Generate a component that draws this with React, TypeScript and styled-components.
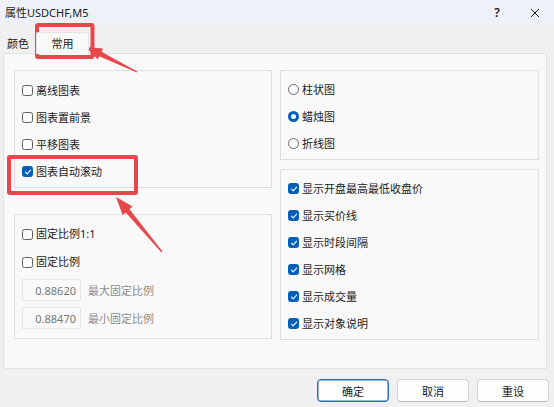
import React from 'react';
import styled, {createGlobalStyle, css} from 'styled-components';

const GlobalStyle = createGlobalStyle`
    html, body {
        margin: 0;
        padding: 0;
        background: #f0f0f0;
    }
    body {
        font-family: 'Noto Sans', 'Noto Sans CJK SC', sans-serif;
        font-size: 11px;
        color: #1b1b1b;
    }
`;

interface CheckProps {
    $checked?: boolean
}

interface RowProps {
    $h?: number
}

const CheckMark = () => (
    <svg width="8" height="8" viewBox="0 0 8 8">
        <path d="M1.4 4.2 L3.2 5.9 L6.6 2.2" fill="none" stroke="#fff" strokeWidth="1.1" strokeLinecap="round" strokeLinejoin="round"/>
    </svg>
);

const Check = ({checked, label}: {checked?: boolean, label: string}) => (
    <>
        <CheckBox $checked={checked}>{checked && <CheckMark/>}</CheckBox>
        <Label>{label}</Label>
    </>
);

const leftTop = ['离线图表', '图表置前景', '平移图表'];
const rightBottom = ['显示开盘最高最低收盘价', '显示买价线', '显示时段间隔', '显示网格', '显示成交量', '显示对象说明'];
const chartTypes = [
    {label: '柱状图', on: false},
    {label: '蜡烛图', on: true},
    {label: '折线图', on: false},
];

const App = () => {
    return (
        <Window>
            <GlobalStyle/>
            <TitleBar>
                <Title>属性USDCHF,M5</Title>
                <TitleActions>
                    <TitleButton>?</TitleButton>
                    <TitleButton>
                        <svg width="10" height="10" viewBox="0 0 10 10">
                            <path d="M1 1 L9 9 M9 1 L1 9" stroke="#1b1b1b" strokeWidth="1"/>
                        </svg>
                    </TitleButton>
                </TitleActions>
            </TitleBar>

            <TabStrip>
                <Tab>颜色</Tab>
                <Tab $active>常用</Tab>
            </TabStrip>

            <Panel>
                <Column $gap={26}>
                    <Group $pad="6px 0 2px 7px">
                        {leftTop.map((t) => (
                            <Row key={t}><Check label={t}/></Row>
                        ))}
                        <Row><Check checked label="图表自动滚动"/></Row>
                    </Group>
                    <Group $pad="5px 0 9px 7px">
                        <Row $h={28}><Check label="固定比例1:1"/></Row>
                        <Row $h={28}><Check label="固定比例"/></Row>
                        <InputRow>
                            <NumberBox>0.88620</NumberBox>
                            <Hint>最大固定比例</Hint>
                        </InputRow>
                        <InputRow>
                            <NumberBox>0.88470</NumberBox>
                            <Hint>最小固定比例</Hint>
                        </InputRow>
                    </Group>
                </Column>

                <Column $gap={9}>
                    <Group $pad="5px 0 2px 7px">
                        {chartTypes.map((c) => (
                            <Row key={c.label}>
                                <Radio $checked={c.on}/>
                                <Label>{c.label}</Label>
                            </Row>
                        ))}
                    </Group>
                    <Group $pad="5px 0 2px 7px">
                        {rightBottom.map((t) => (
                            <Row key={t}><Check checked label={t}/></Row>
                        ))}
                    </Group>
                </Column>
            </Panel>

            <Footer>
                <Button $primary>确定</Button>
                <Button>取消</Button>
                <Button>重设</Button>
            </Footer>

            <Overlay width="554" height="407" viewBox="0 0 554 407">
                <rect x="37" y="25" width="55.5" height="32" fill="none" stroke="#e5474a" strokeWidth="4" rx="1"/>
                <polygon fill="#e5474a" points="86,47 103,48.6 101.5,51.8 137.2,71.6 136.8,72.4 99.3,56.2 97.8,59.4"/>
                <rect x="9" y="157" width="127" height="36" fill="none" stroke="#e5474a" strokeWidth="4" rx="1"/>
                <polygon fill="#e5474a" points="116,197 132.6,206.6 129.5,209.2 162.5,251.6 161.5,252.4 125.7,212.4 122.6,215"/>
            </Overlay>
        </Window>
    );
};

export default App;

const Window = styled.div`
    position: relative;
    width: 554px;
    height: 407px;
    background: #f0f0f0;
    overflow: hidden;
`;

const TitleBar = styled.div`
    display: flex;
    align-items: center;
    justify-content: space-between;
    height: 25px;
    padding-left: 5px;
    background: #eef1f7;
`;

const Title = styled.span`
    font-size: 11px;
    line-height: 14px;
`;

const TitleActions = styled.div`
    display: flex;
    align-items: center;
    height: 100%;
`;

const TitleButton = styled.div`
    display: flex;
    align-items: center;
    justify-content: center;
    width: 38px;
    height: 100%;
    font-size: 12px;
    font-weight: 600;
`;

const TabStrip = styled.div`
    display: flex;
    align-items: flex-end;
    height: 28px;
    padding-left: 2px;
    position: relative;
    z-index: 1;
`;

const Tab = styled.div<{$active?: boolean}>`
    display: flex;
    align-items: center;
    justify-content: center;
    height: 18px;
    padding: 0 5px;
    font-size: 11px;
    margin-bottom: 1px;

    ${(props) => props.$active && css`
        width: 51px;
        height: 20px;
        padding: 0 0 1px;
        margin-left: 2px;
        margin-bottom: -1px;
        background: #f9f9f9;
        border: 1px solid #e3e3e3;
        border-bottom: none;
        border-radius: 2px 2px 0 0;
    `};
`;

const Panel = styled.div`
    display: flex;
    gap: 8px;
    box-sizing: border-box;
    width: 544px;
    height: 316px;
    margin-left: 3px;
    padding: 16px 7px 0 10px;
    background: #f9f9f9;
    border: 1px solid #e3e3e3;
`;

const Column = styled.div<{$gap: number}>`
    display: flex;
    flex-direction: column;
    gap: ${(props) => props.$gap}px;
    width: 259px;

    &:first-child {
        width: 258px;
    }
`;

const Group = styled.div<{$pad: string}>`
    display: flex;
    flex-direction: column;
    padding: ${(props) => props.$pad};
    border: 1px solid #dedede;
    background: #f9f9f9;
`;

const Row = styled.div<RowProps>`
    display: flex;
    align-items: center;
    height: ${(props) => props.$h || 27}px;
`;

const CheckBox = styled.span<CheckProps>`
    display: flex;
    align-items: center;
    justify-content: center;
    box-sizing: border-box;
    width: 11px;
    height: 11px;
    border-radius: 2.5px;
    border: 1px solid #5f5f5f;
    background: #fdfdfd;

    ${(props) => props.$checked && css`
        border-color: #005fb8;
        background: #005fb8;
    `};
`;

const Radio = styled.span<CheckProps>`
    box-sizing: border-box;
    width: 11px;
    height: 11px;
    border-radius: 50%;
    border: 1px solid #6a6a6a;
    background: #fdfdfd;

    ${(props) => props.$checked && css`
        border: 3px solid #005fb8;
        background: #fff;
    `};
`;

const Label = styled.span`
    margin-left: 3px;
    font-size: 11px;
    line-height: 14px;
    white-space: nowrap;
`;

const InputRow = styled.div`
    display: flex;
    align-items: center;
    margin-top: 3px;

    & + & {
        margin-top: 6px;
    }
`;

const NumberBox = styled.div`
    display: flex;
    align-items: center;
    justify-content: flex-end;
    box-sizing: border-box;
    width: 59px;
    height: 22px;
    padding-right: 4px;
    border: 1px solid #e6e6e6;
    background: #fafafa;
    color: #777;
    font-size: 11px;
`;

const Hint = styled.span`
    margin-left: 7px;
    color: #8c8c8c;
    font-size: 11px;
`;

const Footer = styled.div`
    display: flex;
    justify-content: flex-end;
    gap: 8px;
    padding: 10px 5px 0 0;
`;

const Button = styled.div<{$primary?: boolean}>`
    display: flex;
    align-items: center;
    justify-content: center;
    box-sizing: border-box;
    width: 72px;
    height: 23px;
    border-radius: 4px;
    border: 1px solid #d2d2d2;
    border-bottom-color: #bdbdbd;
    background: #fdfdfd;
    font-size: 11px;

    ${(props) => props.$primary && css`
        border: 1px solid #2c6db3;
        box-shadow: inset 0 0 0 0.5px #2c6db3;
    `};
`;

const Overlay = styled.svg`
    position: absolute;
    left: 0;
    top: 0;
    pointer-events: none;
`;
